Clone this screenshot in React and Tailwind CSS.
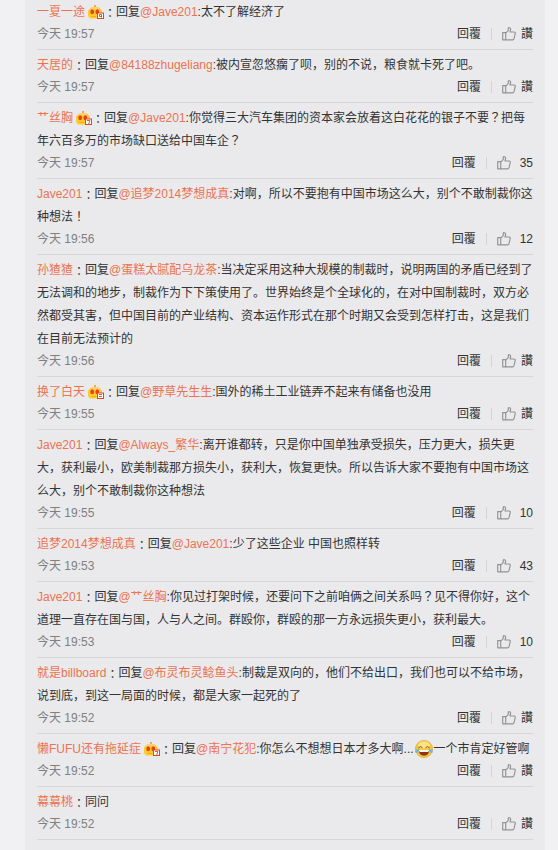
import React from 'react';

const comments = [
  { name: '一夏一途', badge: '4', to: '@Jave201', lines: ['太不了解经济了'], time: '19:57' },
  { name: '天居的', to: '@84188zhugeliang', lines: ['被内宣忽悠瘸了呗，别的不说，粮食就卡死了吧。'], time: '19:57' },
  { name: '艹丝胸', badge: '7', to: '@Jave201', lines: ['你觉得三大汽车集团的资本家会放着这白花花的银子不要？把每', '年六百多万的市场缺口送给中国车企？'], time: '19:57', likes: 35 },
  { name: 'Jave201', to: '@追梦2014梦想成真', lines: ['对啊，所以不要抱有中国市场这么大，别个不敢制裁你这', '种想法！'], time: '19:56', likes: 12 },
  { name: '孙猹猹', to: '@蛋糕太腻配乌龙茶', lines: ['当决定采用这种大规模的制裁时，说明两国的矛盾已经到了', '无法调和的地步，制裁作为下下策使用了。世界始终是个全球化的，在对中国制裁时，双方必', '然都受其害，但中国目前的产业结构、资本运作形式在那个时期又会受到怎样打击，这是我们', '在目前无法预计的'], time: '19:56' },
  { name: '换了白天', badge: '5', to: '@野草先生生', lines: ['国外的稀土工业链弄不起来有储备也没用'], time: '19:55' },
  { name: 'Jave201', to: '@Always_繁华', lines: ['离开谁都转，只是你中国单独承受损失，压力更大，损失更', '大，获利最小，欧美制裁那方损失小，获利大，恢复更快。所以告诉大家不要抱有中国市场这', '么大，别个不敢制裁你这种想法'], time: '19:55', likes: 10 },
  { name: '追梦2014梦想成真', to: '@Jave201', lines: ['少了这些企业 中国也照样转'], time: '19:53', likes: 43 },
  { name: 'Jave201', to: '@艹丝胸', lines: ['你见过打架时候，还要问下之前咱俩之间关系吗？见不得你好，这个', '道理一直存在国与国，人与人之间。群殴你，群殴的那一方永远损失更小，获利最大。'], time: '19:53', likes: 10 },
  { name: '就是billboard', to: '@布灵布灵鲶鱼头', lines: ['制裁是双向的，他们不给出口，我们也可以不给市场，', '说到底，到这一局面的时候，都是大家一起死的了'], time: '19:52' },
  { name: '懒FUFU还有拖延症', badge: '7', to: '@南宁花犯', lines: ['你怎么不想想日本才多大啊...'], after: '一个市肯定好管啊', time: '19:52' },
  { name: '幕幕桃', lines: ['同问'], time: '19:52' },
];

const levelStrokes = {
  4: 'M13.5 12.5V9.5H11.5V11.5H14',
  5: 'M11 9.5H14M11 11.5H14',
  7: 'M11 9.5H13.8L12.8 13',
};

function Badge({ level }) {
  return (
    <svg className="ml-[3px] h-4 w-4 shrink-0" viewBox="0 0 16 16">
      <rect x="6" y="0" width="2" height="2" fill="#f0a94e" />
      <path d="M2 3.5L4 2H10L12 3.5L13.5 5L14 6V11L12 13.5H2L0 11V6L.5 5Z" fill="#fdcb2c" />
      <path d="M2 3.5L4 2H10L12 3.5L11 4.3H3Z" fill="#f6d07a" />
      <ellipse cx="4.2" cy="6.7" rx="1.9" ry="2.5" fill="#e5421c" />
      <ellipse cx="9.3" cy="6.7" rx="1.9" ry="2.5" fill="#e5421c" />
      <path d="M3.5 11.5H8" stroke="#f7a81c" />
      <rect x="9.5" y="8" width="6" height="5.5" fill="#fff" stroke="#d34a2e" />
      <path d={levelStrokes[level]} fill="none" stroke="#d34a2e" strokeWidth="0.9" />
    </svg>
  );
}

function JoyFace() {
  return (
    <svg className="-mt-[2px] mr-px ml-px h-[18px] w-[18px] shrink-0" viewBox="0 0 18 18">
      <circle cx="9" cy="9" r="8.6" fill="#f7c535" stroke="#dda22c" strokeWidth=".6" />
      <ellipse cx="9" cy="5" rx="6" ry="3.6" fill="#fde283" />
      <path d="M3.4 7.8Q5.4 5.6 7.5 7.6M10.5 7.6Q12.6 5.6 14.6 7.8" fill="none" stroke="#8a5c22" strokeWidth="1" />
      <path d="M3.6 10H14.4Q14 15.7 9 15.7T3.6 10Z" fill="#8d3418" />
      <path d="M4 10H14L13.4 12H4.6Z" fill="#fff" />
      <path d="M3.9 9Q0 9.1.2 11.4Q.7 13.7 2.7 12.6Q3.9 11.6 3.9 9ZM14.1 9Q18 9.1 17.8 11.4Q17.3 13.7 15.3 12.6Q14.1 11.6 14.1 9Z" fill="#65b9e8" />
    </svg>
  );
}

function Thumb() {
  return (
    <svg className="h-[14px] w-[14px] shrink-0" viewBox="0 0 14 14" fill="none" stroke="#929295" strokeWidth="1.15" strokeLinejoin="round">
      <path d="M.7 5.6H3.7V12.8H.7ZM3.7 6.2L6.2 3.7V1.6Q6.4.6 7.3.7Q8.8.9 8.6 2.5L8 5H12Q13.5 5.1 13.2 6.6L12 11.7Q11.7 12.8 10.6 12.8H3.7" />
    </svg>
  );
}

// Question and exclamation marks sit in the middle of their full-width cell.
function Line({ text }) {
  return (
    <span>
      {text.split(/([？！])/).map((part, i) =>
        i % 2 ? (
          <span key={i} className="font-['Noto_Sans_CJK_TC',sans-serif] leading-none">{part}</span>
        ) : (
          part
        )
      )}
    </span>
  );
}

function Comment({ item, first }) {
  return (
    <li className={`border-b border-[#d7d7d9] pb-[6px] ${first ? 'pt-px' : 'pt-1'}`}>
      {item.lines.map((line, i) => (
        <div key={i} className="flex h-[23px] items-center whitespace-pre leading-[23px]">
          {i === 0 && (
            <>
              <span className="text-[#eb7350]">{item.name}</span>
              {item.badge && <Badge level={item.badge} />}
              <span className="font-['Noto_Sans_CJK_TC',sans-serif]">：</span>
              {item.to && (
                <>
                  <span>回复</span>
                  <span className="text-[#eb7350]">{item.to}</span>
                  <span>:</span>
                </>
              )}
            </>
          )}
          <Line text={line} />
          {item.after && (
            <>
              <JoyFace />
              <span>{item.after}</span>
            </>
          )}
        </div>
      ))}
      <div className="mt-px flex h-[18px] items-center justify-between leading-[18px]">
        <span className="text-[#808080]">今天 {item.time}</span>
        <div className="flex items-center font-['Liberation_Sans','Noto_Sans_CJK_TC',sans-serif]">
          <span>回覆</span>
          <span className="mx-[10px] h-3 w-px bg-[#d4d4d6]" />
          <Thumb />
          {item.likes ? <span className="ml-[9px]">{item.likes}</span> : <span className="ml-[5px]">讚</span>}
        </div>
      </div>
    </li>
  );
}

export default function App() {
  return (
    <div className="h-[850px] overflow-hidden bg-[#f1f1f3] pr-[13px] pl-[25px] font-['Liberation_Sans','Noto_Sans_CJK_SC',sans-serif] text-xs text-[#333]">
      <ul className="h-full bg-[#eaeaec] px-3">
        {comments.map((item, i) => (
          <Comment key={i} item={item} first={i === 0} />
        ))}
      </ul>
    </div>
  );
}
